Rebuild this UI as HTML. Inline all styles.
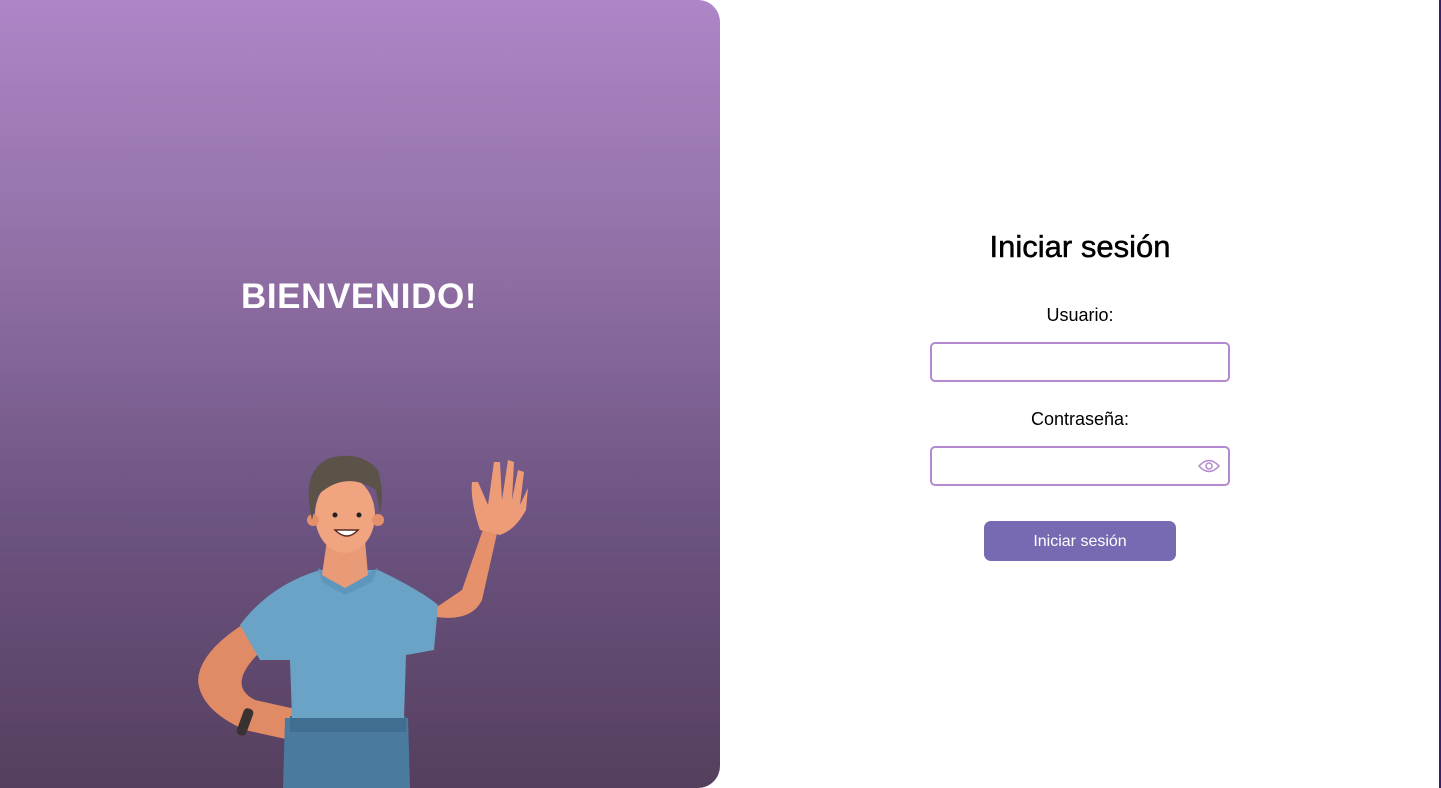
<!DOCTYPE html>
<html><head><meta charset="utf-8"><style>
html,body{margin:0;padding:0;width:1441px;height:788px;overflow:hidden;background:#fff;font-family:"Liberation Sans",sans-serif}
.left{position:absolute;left:0;top:0;width:720px;height:788px;border-radius:0 22px 22px 0;background:linear-gradient(#ae86c8,#8f6ea3 35%,#6d5482 65%,#553f5e);overflow:hidden}
.bv{position:absolute;left:0;width:718px;top:277px;text-align:center;color:#fff;font-size:35px;font-weight:bold;letter-spacing:0.6px}
.edge{position:absolute;right:0;top:0;width:2px;height:788px;background:#3b1f66}
h1{position:absolute;left:880px;width:400px;top:229px;margin:0;text-align:center;font-size:31px;font-weight:normal;color:#000;-webkit-text-stroke:.5px #000}
.lbl{position:absolute;left:930px;width:300px;text-align:center;font-size:18px;color:#000}
.in{position:absolute;left:930px;width:296px;height:36px;border:2px solid #b389cf;border-radius:5px}
.btn{position:absolute;left:984px;top:521px;width:192px;height:40px;border-radius:7px;background:#776ab3;color:#fff;font-size:16px;text-align:center;line-height:42px}
</style></head><body>
<div class="left">
<div class="bv">BIENVENIDO!</div>
<svg width="720" height="788" style="position:absolute;left:0;top:0">
<path d="M425 615 Q470 625 482 600 L500 520 L488 515 L462 590 Z" fill="#e6906c"/>
<path d="M480 530 Q470 500 472 482 L478 482 L488 505 L494 462 L500 462 L502 500 L508 460 L514 462 L512 500 L518 470 L524 472 L520 505 L528 488 L526 510 Q515 530 500 535 Z" fill="#ee9c78"/>
<path d="M250 620 Q200 650 198 680 Q200 710 245 730 L290 740 L300 710 L255 700 Q225 685 262 650 Z" fill="#e08a66"/>
<rect x="240" y="708" width="10" height="28" rx="4" fill="#3a3230" transform="rotate(20 245 722)"/>
<path d="M285 718 L408 718 L410 788 L283 788 Z" fill="#4a7b9e"/>
<rect x="290" y="716" width="116" height="16" fill="#3f6e91"/>
<path d="M320 570 L378 570 Q420 590 438 605 L434 650 L406 655 L404 718 L292 718 L290 660 L260 660 L240 625 Q270 585 320 570 Z" fill="#6aa3c6"/>
<path d="M318 568 L345 585 L378 568 L372 582 L345 595 L322 582 Z" fill="#5f97bc"/>
<path d="M327 540 L365 540 L368 575 L345 588 L322 575 Z" fill="#e99a76"/>
<ellipse cx="345" cy="515" rx="30" ry="38" fill="#f0a47f"/>
<circle cx="313" cy="520" r="6" fill="#e3906c"/><circle cx="378" cy="520" r="6" fill="#e3906c"/>
<path d="M312 520 Q300 470 330 458 Q360 450 378 470 Q385 495 380 512 L376 490 Q345 470 318 495 Z" fill="#5b5248"/>
<circle cx="335" cy="515" r="2.5" fill="#222"/><circle cx="359" cy="515" r="2.5" fill="#222"/>
<path d="M335 530 Q347 542 358 530 Z" fill="#fff" stroke="#5a2a20" stroke-width="1.5"/>
</svg>
</div>
<div class="edge"></div>
<h1>Iniciar sesión</h1>
<div class="lbl" style="top:305px">Usuario:</div>
<div class="in" style="top:342px"></div>
<div class="lbl" style="top:409px">Contraseña:</div>
<div class="in" style="top:446px">
<svg width="22" height="16" style="position:absolute;right:8px;top:10px" viewBox="0 0 22 16"><path d="M1 8 Q11 -3 21 8 Q11 19 1 8 Z" fill="none" stroke="#b389cf" stroke-width="1.5"/><circle cx="11" cy="8" r="3" fill="none" stroke="#b389cf" stroke-width="1.5"/></svg>
</div>
<div class="btn">Iniciar sesión</div>
</body></html>
